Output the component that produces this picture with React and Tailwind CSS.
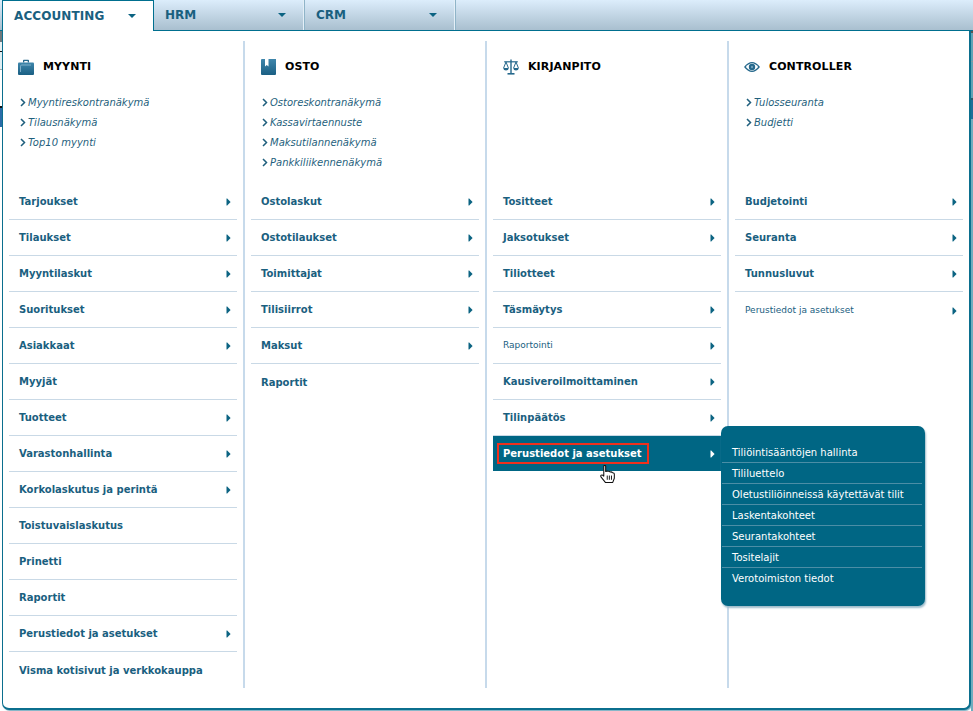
const font = { fontFamily: '"DejaVu Sans", Verdana, sans-serif' };

const Arrow = ({ white }) => (
  <svg width="5" height="8" viewBox="0 0 5 8" className="shrink-0 mt-[1px]">
    <path d="M0.5 0.5 L1.2 0.5 L4.6 4 L1.2 7.5 L0.5 7.5 Z" fill={white ? '#ffffff' : '#0b6382'} />
  </svg>
);

const Chev = () => (
  <svg width="6" height="9" viewBox="0 0 6 9" className="shrink-0">
    <path d="M1 1 L4.5 4.5 L1 8" fill="none" stroke="#1f5f7d" strokeWidth="1.5" />
  </svg>
);

const Caret = () => (
  <svg width="8" height="4" viewBox="0 0 8 4" className="shrink-0">
    <path d="M0 0 H8 L4 4 Z" fill="#0b6382" />
  </svg>
);

const IconDefs = () => (
  <svg width="0" height="0" className="absolute">
    <defs>
      <linearGradient id="ig" x1="0" y1="0" x2="0" y2="1">
        <stop offset="0" stopColor="#3f86ab" />
        <stop offset="1" stopColor="#1a5f83" />
      </linearGradient>
    </defs>
  </svg>
);

const Briefcase = () => (
  <svg width="16" height="16" viewBox="0 0 16 16">
    <path d="M5 3.5 V1.5 Q5 0.7 5.8 0.7 H10.2 Q11 0.7 11 1.5 V3.5 H9.7 V2 H6.3 V3.5 Z" fill="#25688c" />
    <path d="M1 3.5 H15 Q16 3.5 16 4.5 V15 Q16 16 15 16 H1 Q0 16 0 15 V4.5 Q0 3.5 1 3.5 Z" fill="url(#ig)" />
    <path d="M2.5 13 V7.2 Q2.5 6 3.7 6 H13" fill="none" stroke="#8fbdd4" strokeWidth="0.8" />
  </svg>
);

const Book = () => (
  <svg width="15" height="16" viewBox="0 0 15 16">
    <path d="M0.5 0 H15 V15 Q15 16 14 16 H1 Q0 16 0 15 V0.5 Z" fill="url(#ig)" />
    <path d="M4 0 H7.5 V7.5 L5.75 6 L4 7.5 Z" fill="#ffffff" />
  </svg>
);

const Scale = () => (
  <svg width="16" height="16" viewBox="0 0 16 16">
    <g fill="none" stroke="#25688c" strokeWidth="1">
      <path d="M1.2 2.8 H14.8" strokeWidth="1.2" />
      <path d="M3 3 L0.6 9 M3 3 L5.4 9 M13 3 L10.6 9 M13 3 L15.4 9" />
      <path d="M8 0.5 V14" strokeWidth="1.4" />
    </g>
    <path d="M0.2 9 H5.8 Q5.4 11.6 3 11.6 Q0.6 11.6 0.2 9 Z" fill="#25688c" />
    <path d="M10.2 9 H15.8 Q15.4 11.6 13 11.6 Q10.6 11.6 10.2 9 Z" fill="#25688c" />
    <path d="M4.5 14 H11.5 V15.6 H4.5 Z" fill="#25688c" />
  </svg>
);

const Eye = () => (
  <svg width="16" height="10" viewBox="0 0 16 10">
    <path d="M0 5 Q4 0 8 0 Q12 0 16 5 Q12 10 8 10 Q4 10 0 5 Z" fill="#25688c" />
    <path d="M1.8 5 Q5 1.3 8 1.3 Q11 1.3 14.2 5 Q11 8.7 8 8.7 Q5 8.7 1.8 5 Z" fill="#ffffff" />
    <circle cx="8" cy="5" r="3.2" fill="#25688c" />
    <circle cx="8" cy="5" r="1.2" fill="#6fa0bb" />
  </svg>
);

const Hand = () => (
  <svg width="16" height="19" viewBox="0 0 15 18">
    <path
      d="M3.5 1.3 Q3.5 0.4 4.4 0.4 Q5.3 0.4 5.3 1.3 V6.2 Q6.5 5.5 7.5 6 Q8.8 5.7 9.5 6.6 Q11 6.2 11.8 7.3 Q13.5 7.2 13.5 9 V12.5 L12 16.5 H5 L1 11.5 Q0.2 10.3 1.1 9.6 Q2.2 9 3.5 10.5 Z"
      fill="#ffffff"
      stroke="#111111"
      strokeWidth="1"
      strokeLinejoin="round"
    />
    <path d="M6.8 10 V14 M8.8 10 V14 M10.8 10 V14" stroke="#111111" strokeWidth="0.9" />
  </svg>
);

const columns = [
  {
    icon: <Briefcase />,
    title: 'MYYNTI',
    pad: 'pl-[9px]',
    links: ['Myyntireskontranäkymä', 'Tilausnäkymä', 'Top10 myynti'],
    rows: [
      ['Tarjoukset', 1],
      ['Tilaukset', 1],
      ['Myyntilaskut', 1],
      ['Suoritukset', 1],
      ['Asiakkaat', 1],
      ['Myyjät', 0],
      ['Tuotteet', 1],
      ['Varastonhallinta', 1],
      ['Korkolaskutus ja perintä', 1],
      ['Toistuvaislaskutus', 0],
      ['Prinetti', 0],
      ['Raportit', 0],
      ['Perustiedot ja asetukset', 1],
      ['Visma kotisivut ja verkkokauppa', 0],
    ],
  },
  {
    icon: <Book />,
    title: 'OSTO',
    pad: 'pl-[9px]',
    links: ['Ostoreskontranäkymä', 'Kassavirtaennuste', 'Maksutilannenäkymä', 'Pankkiliikennenäkymä'],
    rows: [
      ['Ostolaskut', 1],
      ['Ostotilaukset', 1],
      ['Toimittajat', 1],
      ['Tilisiirrot', 1],
      ['Maksut', 1],
      ['Raportit', 0],
    ],
  },
  {
    icon: <Scale />,
    title: 'KIRJANPITO',
    pad: 'pl-[10px]',
    links: [],
    rows: [
      ['Tositteet', 1],
      ['Jaksotukset', 1],
      ['Tiliotteet', 0],
      ['Täsmäytys', 1],
      ['Raportointi', 1, 'small'],
      ['Kausiveroilmoittaminen', 1],
      ['Tilinpäätös', 1],
      ['Perustiedot ja asetukset', 1, 'active'],
    ],
  },
  {
    icon: <Eye />,
    title: 'CONTROLLER',
    pad: 'pl-[9px]',
    links: ['Tulosseuranta', 'Budjetti'],
    rows: [
      ['Budjetointi', 1],
      ['Seuranta', 1],
      ['Tunnusluvut', 1],
      ['Perustiedot ja asetukset', 1, 'small'],
    ],
  },
];

const subItems = [
  'Tiliöintisääntöjen hallinta',
  'Tililuettelo',
  'Oletustiliöinneissä käytettävät tilit',
  'Laskentakohteet',
  'Seurantakohteet',
  'Tositelajit',
  'Verotoimiston tiedot',
];

const Submenu = () => (
  <div className="absolute left-[228px] top-[-10px] z-10 w-[204px] h-[180px] bg-[#006684] rounded-[7px] pl-[1px] pr-[3px] pt-[16px] shadow-[1px_2px_2px_#9dbccb]">
    {subItems.map((s, i) => (
      <div
        key={s}
        className={`h-[21px] flex items-center pl-[10px] text-[10px] whitespace-nowrap text-white ${i < subItems.length - 1 ? 'border-b border-[#4b8ea6]' : ''}`}
      >
        {s}
      </div>
    ))}
  </div>
);

const Row = ({ label, arrow, kind, last }) => {
  if (kind === 'active') {
    return (
      <div className="relative h-[35px] bg-[#006684] flex items-center justify-between pl-[4px] pr-[6px] mb-[1px]">
        <span className="h-[21px] w-[152px] border-2 border-[#f0301c] flex items-center pl-[4px] text-[10px] font-bold whitespace-nowrap text-white">
          {label}
        </span>
        {arrow ? <Arrow white /> : null}
        <Submenu />
        <div className="absolute left-[107px] top-[29px] z-20 flex">
          <Hand />
        </div>
      </div>
    );
  }
  return (
    <div
      className={`h-[36px] flex items-center justify-between pl-[10px] pr-[6px] ${last ? '' : 'border-b border-[#c9d9e6]'} ${kind === 'small' ? 'text-[9px] font-normal' : 'text-[10px] font-bold'} whitespace-nowrap text-[#1a607f]`}
    >
      <span className={kind === 'small' ? 'pt-[1px]' : ''}>{label}</span>
      {arrow ? <Arrow /> : null}
    </div>
  );
};

const Column = ({ col, isLast }) => (
  <div className={`${isLast ? 'w-[240px]' : 'w-[242px] border-r-2 border-[#c7daeb]'} h-[647px] px-[6px] shrink-0`}>
    <div className={`h-[51px] flex items-center gap-[9px] ${col.pad}`}>
      <span className="w-[16px] flex justify-center">{col.icon}</span>
      <span className="text-[11px] font-bold tracking-[0.1px] text-black pt-[2px]">{col.title}</span>
    </div>
    <div className="h-[92px] pl-[11px]">
      {col.links.map((l) => (
        <div key={l} className="h-[20px] flex items-center gap-[2px] text-[10px] italic whitespace-nowrap text-[#1f5f7d]">
          <Chev />
          <span className="pt-[1px]">{l}</span>
        </div>
      ))}
    </div>
    <div>
      {col.rows.map(([label, arrow, kind], i) => (
        <Row key={label} label={label} arrow={arrow} kind={kind} last={i === col.rows.length - 1} />
      ))}
    </div>
  </div>
);

const Tab = ({ label, w }) => (
  <div className={`${w} h-[30px] flex items-center justify-between pl-[11px] pr-[18px] border-r border-[#8fb4c8] shadow-[inset_-1px_0_0_#e4eff7]`}>
    <span className="text-[12px] font-bold text-[#1a607f]">{label}</span>
    <Caret />
  </div>
);

export default function App() {
  return (
    <div style={font} className="w-[973px] h-[711px] bg-white overflow-hidden relative flex flex-col">
      <IconDefs />
      <div className="h-[31px] shrink-0 flex items-start bg-gradient-to-b from-[#dcedfb] to-[#a9bfcf] border-b border-[#006f8f] pl-[2px]">
        <div className="w-[152px] h-[31px] bg-white border-t border-l border-r border-[#006f8f] flex items-center justify-between pl-[11px] pr-[17px]">
          <span className="text-[12px] font-bold text-[#1a607f] tracking-[0.1px]">ACCOUNTING</span>
          <Caret />
        </div>
        <Tab label="HRM" w="w-[151px]" />
        <Tab label="CRM" w="w-[151px]" />
      </div>
      <div className="flex-1 flex items-stretch">
        <div className="w-[2px] shrink-0 flex flex-col">
          <div className="h-[11px] bg-[#70787c]" />
          <div className="h-[9px] bg-[#e8f0f3]" />
          <div className="h-[1px] bg-[#111111]" />
          <div className="h-[17px] bg-[#dfeef3]" />
          <div className="h-[1px] bg-[#a0a8aa]" />
          <div className="h-[36px] bg-white" />
          <div className="h-[2px] bg-[#111111]" />
          <div className="h-[19px] bg-[#2a6ca8]" />
          <div className="flex-1 bg-white" />
        </div>
        <div className="w-[969px] h-[679px] shrink-0 bg-white border-l border-r-2 border-b-2 border-[#0b6f8e] rounded-b-[7px] pt-[10px] flex shadow-[1px_1px_1px_#7ab0c2]">
          {columns.map((c, i) => (
            <Column key={c.title} col={c} isLast={i === 3} />
          ))}
        </div>
        <div className="w-[2px] shrink-0 flex flex-col">
          <div className="h-[2px] bg-[#555555]" />
          <div className="h-[28px] bg-[#5fa3b6]" />
          <div className="h-[1px] bg-[#7f9aa5]" />
          <div className="h-[36px] bg-[#5fa3b6]" />
          <div className="h-[2px] bg-[#2c5b68]" />
          <div className="h-[19px] bg-[#1e6f99]" />
          <div className="flex-1 bg-[#6fadbf]" />
        </div>
      </div>
    </div>
  );
}
